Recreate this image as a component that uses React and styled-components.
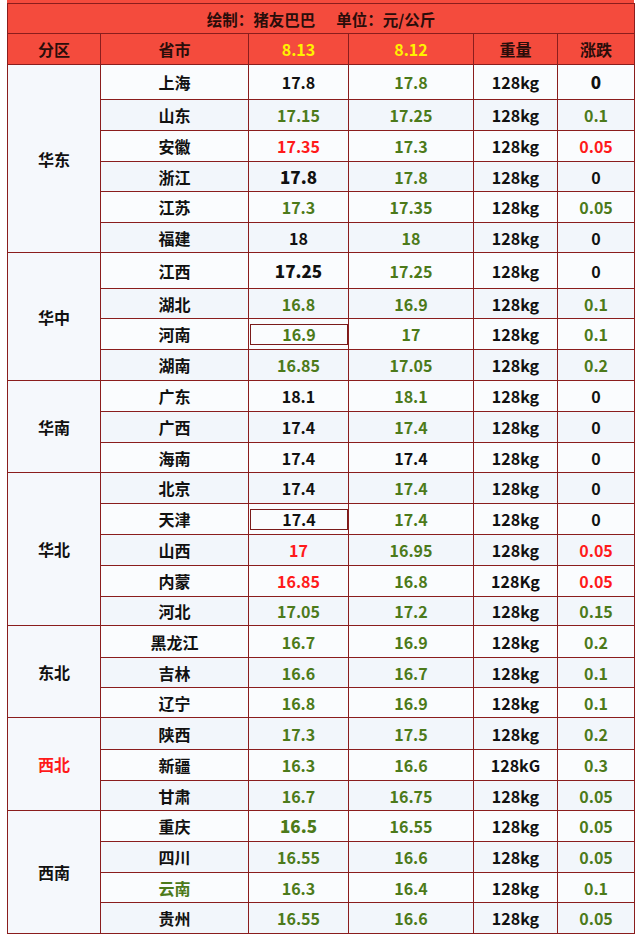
import React from "react";
import styled, { createGlobalStyle } from "styled-components";

const Global = createGlobalStyle`
  html, body { margin: 0; padding: 0; background: #ffffff; }
  body { font-family: "Noto Sans CJK SC", "Noto Sans", sans-serif; }
`;

const Page = styled.div`
  width: 640px;
  padding-left: 7px;
  box-sizing: border-box;
`;

const TopStrip = styled.div`
  width: 627px;
  height: 3px;
  background: #f44b3d;
`;

const Table = styled.table`
  width: 627px;
  border-collapse: collapse;
  table-layout: fixed;
  border: 1px solid #8a1d1d;
`;

const TitleCell = styled.td`
  height: 29px;
  padding: 0;
  background: #f44b3d;
  border: 1px solid #8a1d1d;
  text-align: center;
  font-size: 15.5px;
  line-height: 18px;
  font-weight: 700;
  color: #2a0d0a;
  white-space: pre;
`;

const HeadCell = styled.th`
  height: 30px;
  padding: 0;
  background: #f44b3d;
  border: 1px solid #8a1d1d;
  text-align: center;
  font-size: 16px;
  line-height: 20px;
  font-weight: 700;
  color: ${(p) => (p.$yellow ? "#fff200" : "#2a0d0a")};
`;

const Row = styled.tr`
  background: ${(p) => (p.$alt ? "#f2f6fb" : "#fafcfe")};
`;

const Cell = styled.td`
  padding: 0;
  border: 1px solid #8a1d1d;
  text-align: center;
  vertical-align: middle;
  line-height: 20px;
  font-size: ${(p) => (p.$big ? "17px" : "16px")};
  font-weight: ${(p) => (p.$big ? 800 : 700)};
  color: ${(p) => p.$color || "#111111"};
  white-space: nowrap;
`;

const GroupCell = styled.td`
  padding: 0;
  border: 1px solid #8a1d1d;
  background: #f5f8fc;
  text-align: center;
  vertical-align: middle;
  line-height: 20px;
  font-size: 16px;
  font-weight: 700;
  color: ${(p) => p.$color || "#111111"};
`;

const NameCell = styled(Cell)`
  font-size: 16px;
  font-weight: 700;
`;

const Boxed = styled.div`
  margin: 0 0 0 1px;
  height: 19px;
  line-height: 19px;
  border: 1px solid #7a1b1b;
`;

const G = "#4c7a1a";
const R = "#ff1a1a";
const K = "#111111";

const groups = [
  {
    name: "华东",
    rows: [
      ["上海", 35, "17.8", K, "17.8", G, "128kg", "0", K, { big0: true }],
      ["山东", 31, "17.15", G, "17.25", G, "128kg", "0.1", G],
      ["安徽", 31, "17.35", R, "17.3", G, "128kg", "0.05", R],
      ["浙江", 30, "17.8", K, "17.8", G, "128kg", "0", K, { big: true }],
      ["江苏", 31, "17.3", G, "17.35", G, "128kg", "0.05", G],
      ["福建", 30, "18", K, "18", G, "128kg", "0", K],
    ],
  },
  {
    name: "华中",
    rows: [
      ["江西", 36, "17.25", K, "17.25", G, "128kg", "0", K, { big: true }],
      ["湖北", 30, "16.8", G, "16.9", G, "128kg", "0.1", G],
      ["河南", 31, "16.9", G, "17", G, "128kg", "0.1", G, { boxed: true }],
      ["湖南", 31, "16.85", G, "17.05", G, "128kg", "0.2", G],
    ],
  },
  {
    name: "华南",
    rows: [
      ["广东", 31, "18.1", K, "18.1", G, "128kg", "0", K],
      ["广西", 31, "17.4", K, "17.4", G, "128kg", "0", K],
      ["海南", 30, "17.4", K, "17.4", K, "128kg", "0", K],
    ],
  },
  {
    name: "华北",
    rows: [
      ["北京", 31, "17.4", K, "17.4", G, "128kg", "0", K],
      ["天津", 31, "17.4", K, "17.4", G, "128kg", "0", K, { boxed: true }],
      ["山西", 31, "17", R, "16.95", G, "128kg", "0.05", R],
      ["内蒙", 31, "16.85", R, "16.8", G, "128Kg", "0.05", R],
      ["河北", 29, "17.05", G, "17.2", G, "128kg", "0.15", G],
    ],
  },
  {
    name: "东北",
    rows: [
      ["黑龙江", 32, "16.7", G, "16.9", G, "128kg", "0.2", G],
      ["吉林", 30, "16.6", G, "16.7", G, "128kg", "0.1", G],
      ["辽宁", 30, "16.8", G, "16.9", G, "128kg", "0.1", G],
    ],
  },
  {
    name: "西北",
    color: R,
    rows: [
      ["陕西", 32, "17.3", G, "17.5", G, "128kg", "0.2", G],
      ["新疆", 31, "16.3", G, "16.6", G, "128kG", "0.3", G],
      ["甘肃", 30, "16.7", G, "16.75", G, "128kg", "0.05", G],
    ],
  },
  {
    name: "西南",
    rows: [
      ["重庆", 31, "16.5", G, "16.55", G, "128kg", "0.05", G, { big: true }],
      ["四川", 31, "16.55", G, "16.6", G, "128kg", "0.05", G],
      ["云南", 30, "16.3", G, "16.4", G, "128kg", "0.1", G, { nameColor: G }],
      ["贵州", 31, "16.55", G, "16.6", G, "128kg", "0.05", G],
    ],
  },
];

export default function App() {
  let idx = 0;
  return (
    <Page>
      <Global />
      <TopStrip />
      <Table>
        <colgroup>
          <col style={{ width: 93 }} />
          <col style={{ width: 148 }} />
          <col style={{ width: 100 }} />
          <col style={{ width: 125 }} />
          <col style={{ width: 84 }} />
          <col style={{ width: 77 }} />
        </colgroup>
        <tbody>
          <tr>
            <TitleCell colSpan={6}>{"绘制：猪友巴巴      单位：元/公斤"}</TitleCell>
          </tr>
          <tr>
            <HeadCell>分区</HeadCell>
            <HeadCell>省市</HeadCell>
            <HeadCell $yellow>8.13</HeadCell>
            <HeadCell $yellow>8.12</HeadCell>
            <HeadCell>重量</HeadCell>
            <HeadCell>涨跌</HeadCell>
          </tr>
          {groups.map((g) =>
            g.rows.map((r, i) => {
              const [name, h, a, ac, b, bc, w, d, dc, opt = {}] = r;
              const alt = idx++ % 2 === 1;
              return (
                <Row key={name} $alt={alt} style={{ height: h }}>
                  {i === 0 && (
                    <GroupCell rowSpan={g.rows.length} $color={g.color}>
                      {g.name}
                    </GroupCell>
                  )}
                  <NameCell $color={opt.nameColor}>{name}</NameCell>
                  <Cell $color={ac} $big={opt.big}>
                    {opt.boxed ? <Boxed>{a}</Boxed> : a}
                  </Cell>
                  <Cell $color={bc}>{b}</Cell>
                  <Cell>{w}</Cell>
                  <Cell $color={dc} $big={opt.big0}>
                    {d}
                  </Cell>
                </Row>
              );
            })
          )}
        </tbody>
      </Table>
    </Page>
  );
}
